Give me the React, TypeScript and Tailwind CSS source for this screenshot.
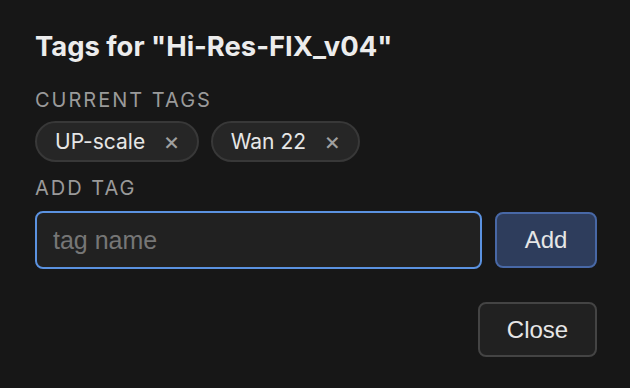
import React, { useState } from 'react';

const TagChip: React.FC<{ label: string; onRemove: () => void }> = ({ label, onRemove }) => (
  <div className="flex h-[41px] items-center gap-[18px] rounded-full border-2 border-[#383838] bg-[#262626] pl-[18px] pr-[17px]">
    <span className="text-[21px] leading-[24px] text-[#e6e6e6]">{label}</span>
    <button onClick={onRemove} className="text-[25px] leading-none text-[#a0a0a0]">
      ×
    </button>
  </div>
);

const App: React.FC = () => {
  const [tags, setTags] = useState(['UP-scale', 'Wan 22']);
  const [nome, setNome] = useState('');

  const handleAdd = () => {
    if (!nome.trim()) return;
    setTags([...tags, nome.trim()]);
    setNome('');
  };

  return (
    <div className="h-[388px] w-[630px] bg-[#171717] pl-[35px] pr-[33px] pt-[30px] font-['Inter',sans-serif]">
      <h2 className="text-[27.4px] font-bold leading-[32px] text-[#ececec]">Tags for "Hi-Res-FIX_v04"</h2>

      <div className="mt-[26px] text-[20px] leading-[24px] tracking-[0.1em] text-[#9a9a9a]">CURRENT TAGS</div>
      <div className="mt-[9px] flex gap-[12px]">
        {tags.map((t) => (
          <TagChip key={t} label={t} onRemove={() => setTags(tags.filter((x) => x !== t))} />
        ))}
      </div>

      <div className="mt-[14px] text-[20px] leading-[24px] tracking-[0.1em] text-[#9a9a9a]">ADD TAG</div>
      <div className="mt-[11px] flex items-center gap-[13px]">
        <input
          autoFocus
          type="text"
          placeholder="tag name"
          value={nome}
          onChange={(e) => setNome(e.target.value)}
          className="h-[58px] flex-1 rounded-[8px] border-2 border-[#5b92e0] bg-[#212121] px-[16px] font-['Liberation_Sans',sans-serif] text-[25px] text-[#e6e6e6] caret-[#e6e6e6] outline-none placeholder:text-[#767676]"
        />
        <button
          onClick={handleAdd}
          className="h-[56px] w-[102px] rounded-[8px] border-2 border-[#4868a6] bg-[#2e3d5c] font-['Liberation_Sans',sans-serif] text-[24px] text-[#e6e6e6]"
        >
          Add
        </button>
      </div>

      <div className="mt-[33px] flex justify-end">
        <button className="h-[55px] w-[119px] rounded-[8px] border-2 border-[#444444] bg-[#212121] font-['Liberation_Sans',sans-serif] text-[24px] text-[#e6e6e6]">
          Close
        </button>
      </div>
    </div>
  );
};

export default App;
